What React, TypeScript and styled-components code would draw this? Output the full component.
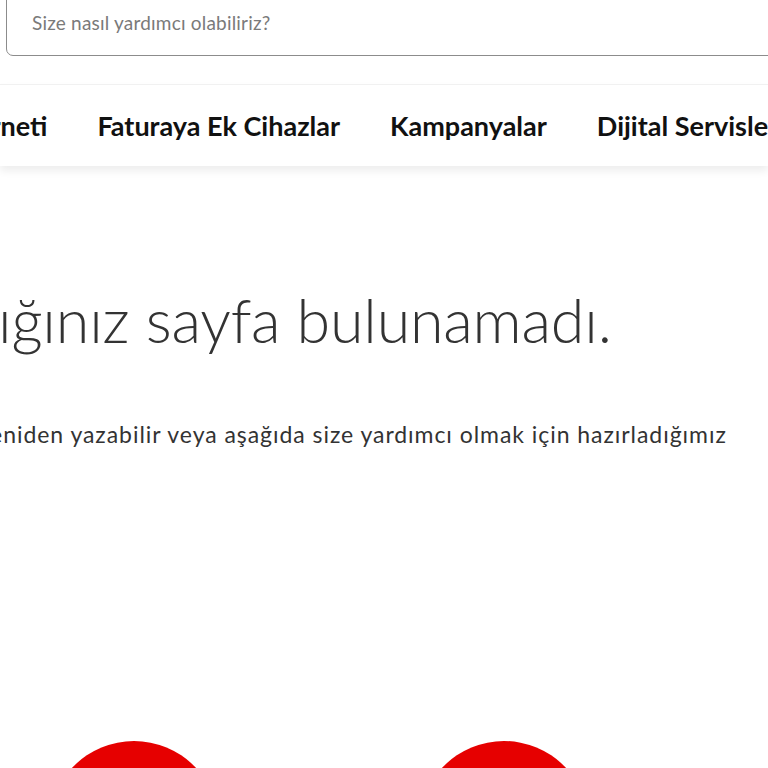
import React from "react";
import styled, { createGlobalStyle } from "styled-components";

const GlobalStyle = createGlobalStyle`
  html, body {
    margin: 0;
    padding: 0;
    background: #ffffff;
    overflow: hidden;
  }
  body {
    font-family: "Lato", "Open Sans", "Liberation Sans", sans-serif;
    color: #333333;
  }
`;

const Page = styled.div`
  width: 768px;
  height: 768px;
  overflow: hidden;
`;

const SearchArea = styled.header`
  padding: 0 0 0 6px;
  margin-top: -16px;
`;

const SearchBox = styled.div`
  width: 900px;
  height: 72px;
  box-sizing: border-box;
  border: 1px solid #8c8c8c;
  border-radius: 7px;
  display: flex;
  align-items: flex-end;
  padding: 0 0 21px 25px;
`;

const Placeholder = styled.span`
  font-family: "Lato", sans-serif;
  font-size: 19px;
  letter-spacing: 0.2px;
  color: #7a7a7a;
  white-space: nowrap;
`;

const NavBar = styled.nav`
  margin-top: 28px;
  height: 82px;
  box-sizing: border-box;
  padding-bottom: 1px;
  border-top: 1px solid #f1f1f1;
  background: #ffffff;
  box-shadow: 0 5px 8px rgba(0, 0, 0, 0.07);
  display: flex;
  align-items: center;
  overflow: hidden;
`;

const NavList = styled.ul<{ $shift: number }>`
  list-style: none;
  margin: 0 0 0 ${(p) => p.$shift}px;
  padding: 0;
  display: flex;
  gap: 50px;
  white-space: nowrap;
  flex: none;
`;

const NavItem = styled.li`
  font-family: "Lato", sans-serif;
  font-weight: 700;
  font-size: 27px;
  color: #111111;
  letter-spacing: 0px;
`;

const Main = styled.main`
  display: flex;
  flex-direction: column;
`;

const Heading = styled.h1<{ $shift: number }>`
  margin: 118px 0 0 ${(p) => p.$shift}px;
  font-family: "Lato", sans-serif;
  font-weight: 300;
  font-size: 61px;
  letter-spacing: -0.2px;
  line-height: 72px;
  color: #333333;
  white-space: nowrap;
`;

const Lead = styled.p<{ $shift: number }>`
  margin: 63px 0 0 ${(p) => p.$shift}px;
  font-family: "Lato", sans-serif;
  font-weight: 400;
  font-size: 23px;
  letter-spacing: 0.95px;
  line-height: 30px;
  color: #333333;
  white-space: nowrap;
`;

const CircleRow = styled.div`
  margin-top: 292px;
  padding-left: 49px;
  display: flex;
  gap: 200px;
`;

const RedCircle = styled.div`
  width: 170px;
  height: 170px;
  border-radius: 50%;
  background: #e60000;
  flex: none;
`;

export default function App() {
  return (
    <>
      <GlobalStyle />
      <Page>
        <SearchArea>
          <SearchBox>
            <Placeholder>Size nasıl yardımcı olabiliriz?</Placeholder>
          </SearchBox>
        </SearchArea>
        <NavBar>
          <NavList $shift={-92}>
            <NavItem>Ev İnterneti</NavItem>
            <NavItem>Faturaya Ek Cihazlar</NavItem>
            <NavItem>Kampanyalar</NavItem>
            <NavItem>Dijital Servisler</NavItem>
          </NavList>
        </NavBar>
        <Main>
          <Heading $shift={-125}>Aradığınız sayfa bulunamadı.</Heading>
          <Lead $shift={-237}>
            Adresi kontrol edip yeniden yazabilir veya aşağıda size yardımcı olmak için hazırladığımız
          </Lead>
          <CircleRow>
            <RedCircle />
            <RedCircle />
          </CircleRow>
        </Main>
      </Page>
    </>
  );
}
